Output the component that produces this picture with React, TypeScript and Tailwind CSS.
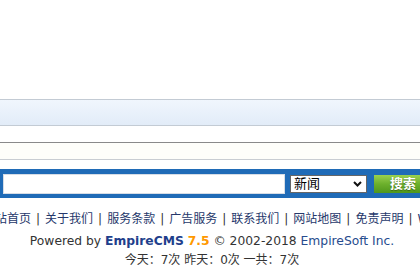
export default function App() {
  const links = ["网站首页", "关于我们", "服务条款", "广告服务", "联系我们", "网站地图", "免责声明", "WAP"];

  return (
    <div
      className="w-[420px] h-[280px] overflow-hidden bg-white text-[12px] text-[#333]"
      style={{ fontFamily: '"DejaVu Sans", "Noto Sans CJK SC", sans-serif' }}
    >
      {/* empty top area */}
      <div className="h-[99px]" />

      {/* nav strip */}
      <div className="h-[27px] border-y border-[#c3cbd4] bg-gradient-to-b from-[#f0f6fd] to-[#e2ecf8]" />
      <div className="h-[16px]" />

      {/* notice strip */}
      <div className="h-[18px] border-t border-[#8a8a8a] border-b border-b-[#c9cdd2] bg-[#fefefa]" />
      <div className="h-[9px]" />

      {/* search bar */}
      <div className="h-[29px] bg-[#1f6bb7] flex items-center pl-[3px]">
        <div className="w-[282px] h-[20px] bg-white border border-[#d6dde6] shrink-0" />
        <div className="ml-[5px] w-[77px] h-[18px] bg-white border border-[#666] shrink-0 flex items-center justify-between pl-[3px] pr-[4px]">
          <span className="text-[13px] text-black leading-none">新闻</span>
          <svg width="9" height="6" viewBox="0 0 9 6">
            <path d="M1 1l3.5 3.5L8 1" stroke="#111" strokeWidth="2" fill="none" />
          </svg>
        </div>
        <button className="ml-[7px] w-[58px] h-[18px] shrink-0 bg-gradient-to-b from-[#9ad14f] via-[#6cb02c] to-[#4f971c] text-white font-bold text-[13px] leading-none [text-shadow:0_1px_1px_rgba(0,0,0,0.35)]">
          搜索
        </button>
      </div>

      {/* footer */}
      <div className="overflow-hidden mt-[13px]">
        <div className="flex whitespace-nowrap -ml-[17px] text-[#26386b] leading-[16px]">
          {links.map((l, i) => (
            <span key={l} className="flex shrink-0">
              {i > 0 && <span className="px-[5px] text-[#333]">|</span>}
              <span>{l}</span>
            </span>
          ))}
        </div>
      </div>
      <div className="text-center mt-[6px] pl-[4px] leading-[16px] text-[12.3px]">
        Powered by <b className="text-[#1f3f8c]">EmpireCMS</b> <b className="text-[#ff9900]">7.5</b> © 2002-2018{" "}
        <span className="text-[#274c8e]">EmpireSoft Inc.</span>
      </div>
      <div className="text-center mt-[3px] pl-[4px] leading-[16px]">今天：7次 昨天：0次 一共：7次</div>
      <div className="mt-[12px] border-t border-[#cccccc]" />
    </div>
  );
}
